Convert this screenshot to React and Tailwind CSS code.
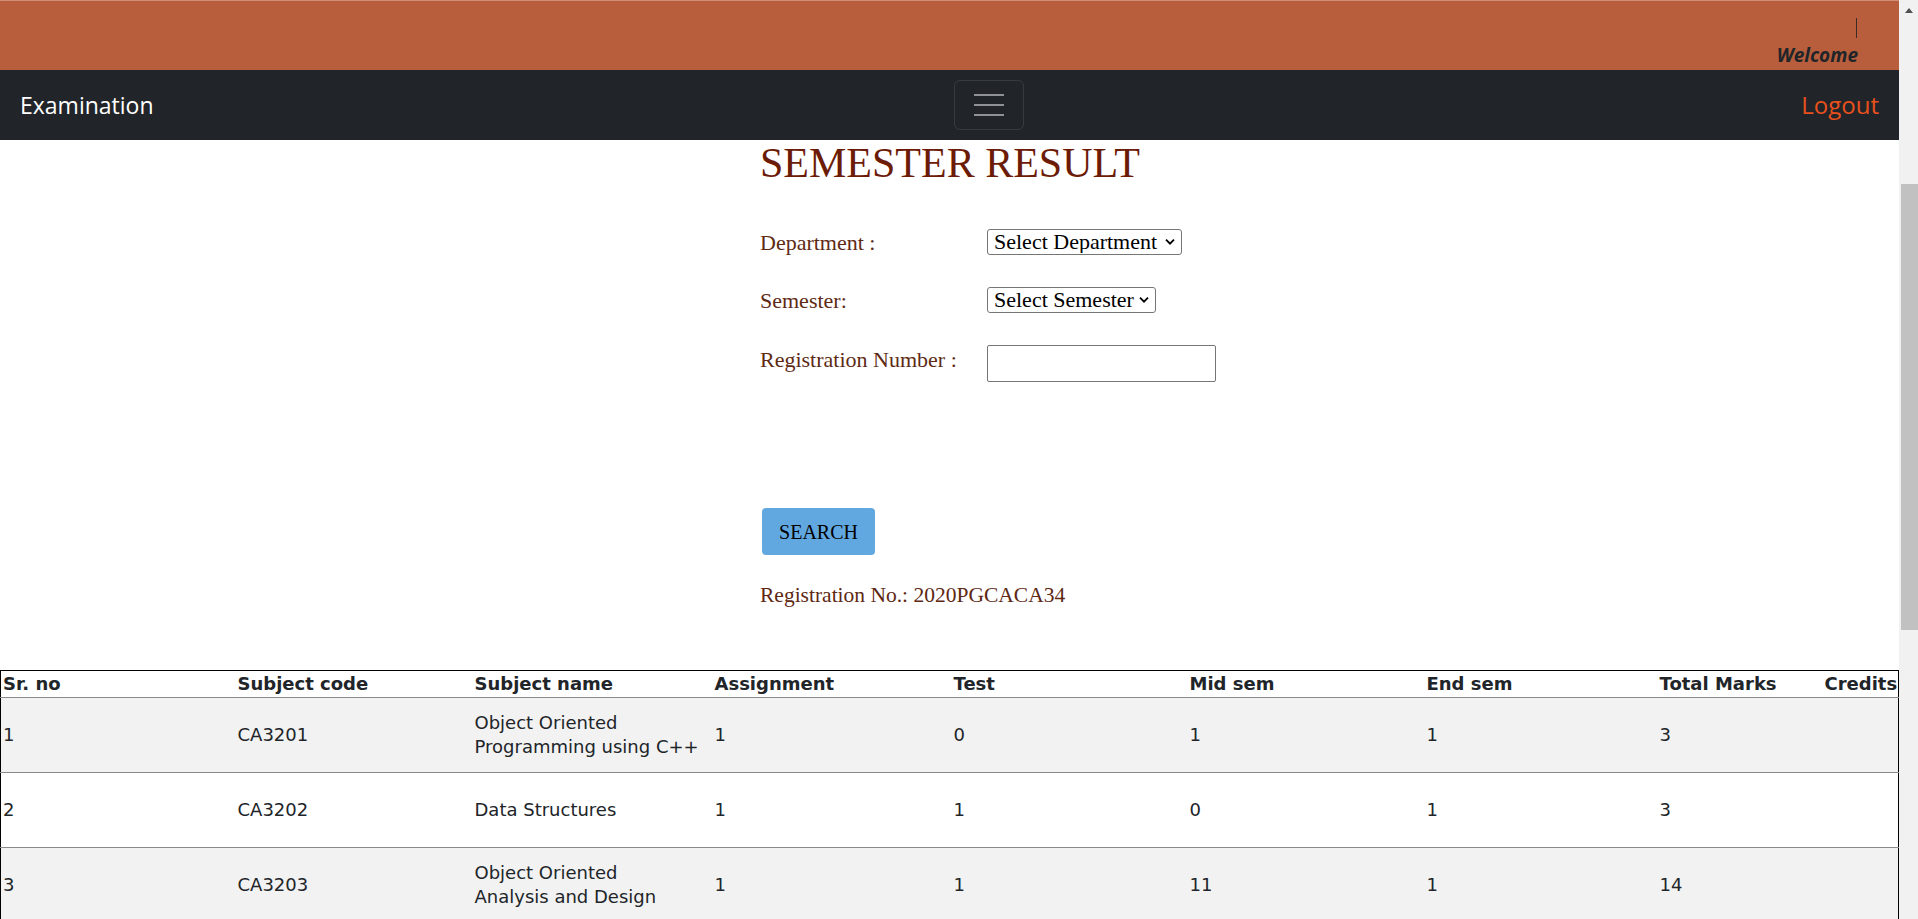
import React from 'react';

const rows = [
  { sr: '1', code: 'CA3201', name: ['Object Oriented', 'Programming using C++'], asg: '1', test: '0', mid: '1', end: '1', total: '3', credits: '' },
  { sr: '2', code: 'CA3202', name: ['Data Structures'], asg: '1', test: '1', mid: '0', end: '1', total: '3', credits: '' },
  { sr: '3', code: 'CA3203', name: ['Object Oriented', 'Analysis and Design'], asg: '1', test: '1', mid: '11', end: '1', total: '14', credits: '' },
];

const headers = ['Sr. no', 'Subject code', 'Subject name', 'Assignment', 'Test', 'Mid sem', 'End sem', 'Total Marks', 'Credits'];

function Chevron() {
  return (
    <svg
      className="pointer-events-none absolute right-[7px] top-1/2 -translate-y-1/2"
      width="10"
      height="7"
      viewBox="0 0 10 7"
      fill="none"
    >
      <path d="M1 1.2L5 5.2L9 1.2" stroke="#000" strokeWidth="1.8" />
    </svg>
  );
}

function SelectBox({ label, width }) {
  return (
    <div className="relative inline-flex">
      <select
        className={`appearance-none ${width} h-[26px] border border-[#767676] rounded-[3px] bg-white pl-[6px] text-[22px] leading-none text-black [font-family:'Liberation_Serif',serif]`}
        defaultValue=""
      >
        <option value="">{label}</option>
      </select>
      <Chevron />
    </div>
  );
}

export default function App() {
  return (
    <div className="flex h-[919px] overflow-hidden bg-white">
      <div className="flex-1 min-w-0">
        {/* top strip */}
        <div className="h-[70px] border-t border-[#cf8f76] bg-[#b95e3c] flex flex-col items-end pr-[41px]">
          <div className="mt-[17px] mr-[1px] w-px h-[20px] bg-[#3b2b24]" />
          <p className="mt-[5px] text-[19px] leading-[25px] font-bold italic text-[#212529] [font-family:'Open_Sans',sans-serif]">
            Welcome
          </p>
        </div>

        {/* navbar */}
        <nav className="h-[70px] bg-[#212529] flex items-center justify-between px-[20px] [font-family:'Open_Sans',sans-serif]">
          <span className="mr-6 text-[23px] text-white">Examination</span>
          <button className="w-[70px] h-[50px] rounded-[6px] border border-white/10 flex flex-col items-center justify-center gap-[8px]">
            <span className="block w-[30px] h-[2px] bg-[#8f9194]" />
            <span className="block w-[30px] h-[2px] bg-[#8f9194]" />
            <span className="block w-[30px] h-[2px] bg-[#8f9194]" />
          </button>
          <a className="text-[24px] text-[#e8501c]" href="#">
            Logout
          </a>
        </nav>

        {/* form */}
        <main className="pl-[760px] [font-family:'Liberation_Serif',serif]">
          <h1 className="mt-[3px] text-[42px] leading-[41px] text-[#6c1b07]">SEMESTER RESULT</h1>

          <div className="mt-[45px] flex flex-col gap-[32px] text-[22px] text-[#5e2a14]">
            <div className="flex items-center h-[26px]">
              <label className="w-[227px] shrink-0">Department :</label>
              <SelectBox label="Select Department" width="w-[195px]" />
            </div>
            <div className="flex items-center h-[26px]">
              <label className="w-[227px] shrink-0">Semester:</label>
              <SelectBox label="Select Semester" width="w-[169px]" />
            </div>
            <div className="flex items-center h-[37px]">
              <label className="w-[227px] shrink-0 pb-[9px]">Registration Number :</label>
              <input
                type="text"
                className="w-[229px] h-[37px] border border-[#767676] rounded-[2px] bg-white"
              />
            </div>
          </div>

          <button className="ml-[2px] mt-[126px] h-[47px] w-[113px] rounded-[4px] bg-[#62a8e0] text-[20px] text-black">
            SEARCH
          </button>

          <p className="mt-[28px] text-[21.5px] leading-[24px] text-[#5e2813]">Registration No.: 2020PGCACA34</p>
        </main>

        {/* results */}
        <table className="mt-[63px] w-full table-fixed border-collapse border border-black text-[18px] leading-[24px] text-[#212529] [font-family:'DejaVu_Sans',sans-serif]">
          <colgroup>
            <col className="w-[235px]" />
            <col className="w-[237px]" />
            <col className="w-[240px]" />
            <col className="w-[239px]" />
            <col className="w-[236px]" />
            <col className="w-[237px]" />
            <col className="w-[233px]" />
            <col className="w-[165px]" />
            <col />
          </colgroup>
          <thead>
            <tr className="h-[27px] border-b border-[#8a8a8a] bg-white">
              {headers.map((h) => (
                <th key={h} className="px-[2px] py-0 text-left font-bold whitespace-nowrap">
                  {h}
                </th>
              ))}
            </tr>
          </thead>
          <tbody>
            {rows.map((r, i) => (
              <tr
                key={r.sr}
                className={`h-[75px] border-b border-[#8a8a8a] ${i % 2 === 0 ? 'bg-[#f2f2f2]' : 'bg-white'}`}
              >
                <td className="px-[2px] align-middle">{r.sr}</td>
                <td className="px-[2px] align-middle">{r.code}</td>
                <td className="px-[2px] align-middle">
                  {r.name.map((line) => (
                    <span key={line} className="block whitespace-nowrap">
                      {line}
                    </span>
                  ))}
                </td>
                <td className="px-[2px] align-middle">{r.asg}</td>
                <td className="px-[2px] align-middle">{r.test}</td>
                <td className="px-[2px] align-middle">{r.mid}</td>
                <td className="px-[2px] align-middle">{r.end}</td>
                <td className="px-[2px] align-middle">{r.total}</td>
                <td className="px-[2px] align-middle">{r.credits}</td>
              </tr>
            ))}
          </tbody>
        </table>
      </div>

      {/* scrollbar */}
      <div className="w-[19px] shrink-0 bg-[#f1f1f1] flex flex-col">
        <div className="h-[17px] flex items-center justify-center pt-[3px]">
          <svg width="8" height="5" viewBox="0 0 8 5">
            <path d="M0 5L4 0L8 5Z" fill="#505050" />
          </svg>
        </div>
        <div className="mt-[167px] ml-[2px] h-[446px] bg-[#c1c1c1]" />
      </div>
    </div>
  );
}
